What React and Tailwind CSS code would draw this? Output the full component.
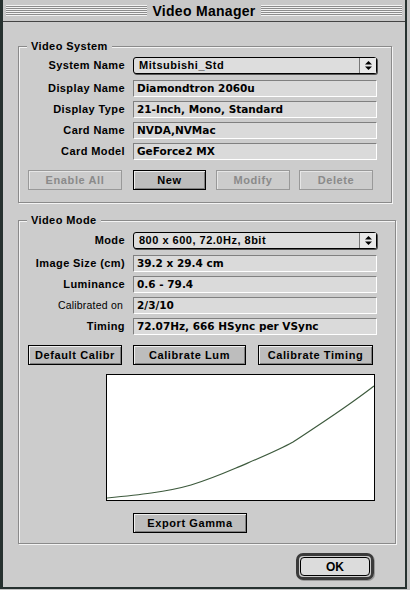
import React from 'react';

const font = { fontFamily: '"Liberation Sans", Arial, sans-serif' };
const fieldFont = { fontFamily: '"DejaVu Sans", Verdana, sans-serif' };

function Popup({ value }) {
  return (
    <div className="flex h-[17px] w-[244px] items-stretch rounded-[3px] border border-black bg-[#dddddd] shadow-[1px_1px_0_#555]">
      <div className="flex flex-1 items-center pl-[5px] text-[11px] font-bold tracking-[0.5px] text-black">{value}</div>
      <div className="flex w-[17px] flex-col items-center justify-center border-l border-[#777] bg-[#e8e8e8]">
        <svg width="7" height="9" viewBox="0 0 7 9">
          <path d="M3.5 0 L7 3.5 L0 3.5 Z" fill="#000" />
          <path d="M0 5.5 L7 5.5 L3.5 9 Z" fill="#000" />
        </svg>
      </div>
    </div>
  );
}

function Field({ value }) {
  return (
    <div
      style={fieldFont}
      className="flex h-[17px] w-[244px] items-center border-t border-l border-[#808080] border-b border-r border-b-white border-r-white bg-[#dadada] pl-[3px] text-[10.5px] font-bold text-black"
    >
      {value}
    </div>
  );
}

function Row({ label, small, children }) {
  return (
    <div className="flex items-center">
      <div
        className={
          small
            ? 'w-[107px] pr-[3px] text-right text-[10.5px] tracking-[0.2px] text-black'
            : 'w-[107px] pr-[1px] text-right text-[11px] font-bold tracking-[0.4px] text-black'
        }
      >
        {label}
      </div>
      <div className="ml-[7px]">{children}</div>
    </div>
  );
}

function Button({ label, width, disabled }) {
  if (disabled) {
    return (
      <div
        className="flex h-[20px] items-center justify-center border border-[#999] bg-[#cccccc] text-[11px] font-bold tracking-[0.6px] text-[#8a8a8a] shadow-[inset_1px_1px_0_#e6e6e6]"
        style={{ width }}
      >
        {label}
      </div>
    );
  }
  return (
    <div
      className="flex h-[20px] items-center justify-center border border-black bg-[#bdbdbd] text-[11px] font-bold tracking-[0.6px] text-black shadow-[inset_1px_1px_0_#eeeeee,inset_-1px_-1px_0_#808080]"
      style={{ width }}
    >
      {label}
    </div>
  );
}

function Group({ title, className, children }) {
  return (
    <div className={'relative border border-[#8a8a8a] shadow-[1px_1px_0_#f4f4f4,inset_1px_1px_0_#f4f4f4] ' + className}>
      <div className="absolute left-[8px] top-[-8px] bg-[#cccccc] px-[4px] text-[11px] font-bold leading-[14px] tracking-[0.4px] text-black">
        {title}
      </div>
      {children}
    </div>
  );
}

export default function App() {
  return (
    <div style={font} className="h-[590px] w-[410px] bg-[#c4c4c4]">
      <div className="flex h-[589px] w-[407px] flex-col border-l-[3px] border-r-2 border-b-2 border-[#26312f] bg-[#cccccc]">
        {/* title bar */}
        <div className="flex h-[22px] items-center border-b border-[#444] bg-[#c8c8c8] px-[3px]">
          <div className="h-[11px] flex-1 bg-[repeating-linear-gradient(to_bottom,#f2f2f2_0px,#f2f2f2_1px,#8c8c8c_1px,#8c8c8c_2px)]" />
          <div className="px-[5px] text-[14px] font-bold leading-[18px] tracking-[0.3px] text-black">Video Manager</div>
          <div className="h-[11px] flex-1 bg-[repeating-linear-gradient(to_bottom,#f2f2f2_0px,#f2f2f2_1px,#8c8c8c_1px,#8c8c8c_2px)]" />
        </div>

        <div className="flex flex-col pl-[15px]">
          <Group title="Video System" className="mt-[24px] w-[374px] pt-[10px] pb-[12px]">
            <div className="flex flex-col gap-[4px]">
              <div className="mb-[2px]">
                <Row label="System Name"><Popup value="Mitsubishi_Std" /></Row>
              </div>
              <Row label="Display Name"><Field value="Diamondtron 2060u" /></Row>
              <Row label="Display Type"><Field value="21-Inch, Mono, Standard" /></Row>
              <Row label="Card Name"><Field value="NVDA,NVMac" /></Row>
              <Row label="Card Model"><Field value="GeForce2 MX" /></Row>
            </div>
            <div className="mt-[10px] flex pl-[9px]">
              <Button label="Enable All" width={94} disabled />
              <div className="ml-[11px]"><Button label="New" width={73} /></div>
              <div className="ml-[10px]"><Button label="Modify" width={74} disabled /></div>
              <div className="ml-[9px]"><Button label="Delete" width={74} disabled /></div>
            </div>
          </Group>

          <Group title="Video Mode" className="mt-[17px] w-[378px] pt-[11px] pb-[10px]">
            <div className="flex flex-col gap-[4px]">
              <div className="mb-[2px]">
                <Row label="Mode"><Popup value="800 x 600, 72.0Hz, 8bit" /></Row>
              </div>
              <Row label="Image Size (cm)"><Field value="39.2 x 29.4 cm" /></Row>
              <Row label="Luminance"><Field value="0.6 - 79.4" /></Row>
              <Row label="Calibrated on" small><Field value="2/3/10" /></Row>
              <Row label="Timing"><Field value="72.07Hz, 666 HSync per VSync" /></Row>
            </div>
            <div className="mt-[10px] flex pl-[9px]">
              <Button label="Default Calibr" width={94} />
              <div className="ml-[11px]"><Button label="Calibrate Lum" width={113} /></div>
              <div className="ml-[12px]"><Button label="Calibrate Timing" width={115} /></div>
            </div>
            <div className="ml-[87px] mt-[9px] h-[127px] w-[269px] border border-black bg-white">
              <svg width="267" height="125" viewBox="0 0 267 125">
                <path
                  d="M0 123 C 30 120, 60 117, 84 110 C 100 105, 115 99, 129 93 C 150 84, 170 76, 186 67 C 215 48, 240 32, 267 11"
                  fill="none"
                  stroke="#3d5a3d"
                  strokeWidth="1.2"
                />
              </svg>
            </div>
            <div className="mt-[12px] pl-[114px]">
              <Button label="Export Gamma" width={114} />
            </div>
          </Group>

          <div className="mt-[9px] flex pl-[278px]">
            <div className="rounded-[7px] border-[3px] border-[#3a3a3a] p-[1px] shadow-[1px_1px_0_#999]">
              <div className="flex h-[19px] w-[70px] items-center justify-center rounded-[4px] border border-black bg-[#dcdcdc] text-[12px] font-bold text-black">
                OK
              </div>
            </div>
          </div>
        </div>
      </div>
    </div>
  );
}
